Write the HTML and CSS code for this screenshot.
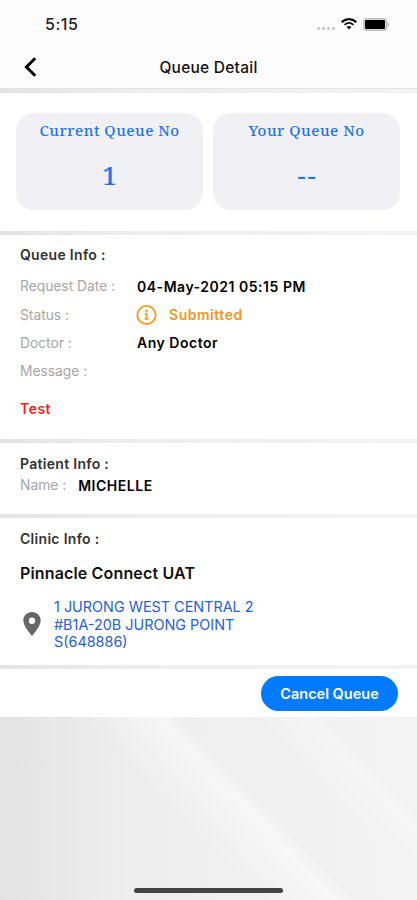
FILE: index.html
```
<!DOCTYPE html>
<html lang="en">
<head>
  <meta charset="UTF-8">
  <meta name="viewport" content="width=device-width, initial-scale=1.0">
  <title>Queue Detail</title>
  <link rel="stylesheet" href="styles.css">
</head>
<body>
  <div class="screen">
    <header class="header">
      <div class="status-bar">
        <span class="time">5:15</span>
        <div class="status-icons">
          <span class="signal"><i></i><i></i><i></i><i></i></span>
          <svg class="wifi" width="16" height="12" viewBox="0 0 16 12">
            <path d="M.7 4.2C5 .2 11 .2 15.300 4.200" fill="none" stroke="#111" stroke-width="2.200"/>
            <path d="M3.500 6.900C6.200 4.500 9.800 4.500 12.500 6.900" fill="none" stroke="#111" stroke-width="1.800"/>
            <path d="M5.500 9C7 7.700 9 7.700 10.500 9L8 11.600z" fill="#111"/>
          </svg>
          <svg class="battery" width="27" height="13" viewBox="0 0 27 13">
            <rect x=".7" y=".7" width="22.600" height="11.600" rx="2.500" fill="#ddd" stroke="#bbb" stroke-width="1.200"/>
            <rect x="2" y="2" width="20" height="9" rx="1" fill="#000"/>
            <path d="M24.500 4v5c2-.8 2-4.200 0-5z" fill="#aaa"/>
          </svg>
        </div>
      </div>
      <div class="nav-bar">
        <svg class="back" width="14" height="20" viewBox="0 0 14 20">
          <path d="M11.200 1.200L2.400 10l8.800 8.800" fill="none" stroke="#000" stroke-width="3"/>
        </svg>
        <h1>Queue Detail</h1>
      </div>
    </header>

    <!-- Queue numbers -->
    <section class="panel queue-numbers">
      <div class="queue-card">
        <h2>Current Queue No</h2>
        <p>1</p>
      </div>
      <div class="queue-card">
        <h2>Your Queue No</h2>
        <p class="empty">--</p>
      </div>
    </section>

    <section class="panel queue-info">
      <h3>Queue Info :</h3>
      <div class="row"><span class="label">Request Date :</span><span class="value">04-May-2021 05:15 PM</span></div>
      <div class="row">
        <span class="label">Status :</span>
        <span class="value status">
          <svg width="21" height="22" viewBox="0 0 22 22">
            <circle cx="11" cy="11" r="9.600" fill="none" stroke="#f99a1c" stroke-width="1.900"/>
            <circle cx="11" cy="6.800" r="1.300" fill="#f99a1c"/>
            <path d="M9.300 9.800H11v5M9 15.100h4" fill="none" stroke="#f99a1c" stroke-width="1.700"/>
          </svg>
          <span>Submitted</span>
        </span>
      </div>
      <div class="row"><span class="label">Doctor :</span><span class="value">Any Doctor</span></div>
      <div class="row"><span class="label">Message :</span></div>
      <p class="message">Test</p>
    </section>

    <section class="panel patient-info">
      <h3>Patient Info :</h3>
      <div class="name-row"><span class="label">Name :</span><span class="value">MICHELLE</span></div>
    </section>

    <section class="panel clinic-info">
      <h3>Clinic Info :</h3>
      <p class="clinic-name">Pinnacle Connect UAT</p>
      <div class="location">
        <svg width="18" height="24" viewBox="0 0 18 24">
          <path d="M9 0C4 0 .3 3.800.3 8.600.3 14.500 9 24 9 24s8.700-9.500 8.700-15.400C17.700 3.800 14 0 9 0zm0 5.500a3.200 3.200 0 1 1 0 6.400 3.200 3.200 0 0 1 0-6.400z" fill="#666"/>
        </svg>
        <address>1 JURONG WEST CENTRAL 2<br>#B1A-20B JURONG POINT<br>S(648886)</address>
      </div>
    </section>

    <section class="panel actions">
      <button class="cancel-btn">Cancel Queue</button>
    </section>

    <div class="home-area"><span class="home-indicator"></span></div>
  </div>
</body>
</html>
```
FILE: styles.css
```
* {
  box-sizing: border-box;
}

body {
  margin: 0;
  font-family: Inter, "Liberation Sans", sans-serif;
  color: #111;
}

h1, h2, h3, p {
  margin: 0;
}

svg {
  display: block;
  flex-shrink: 0;
}

/* The grey background shows through the gaps between panels */
.screen {
  height: 900px;
  display: flex;
  flex-direction: column;
  gap: 4px;
  overflow: hidden;
  background: linear-gradient(90deg, #e3e3e3 0, #eee 32%, #f3f3f3 100%);
}

.header {
  height: 89px;
  background: #fcfcfc;
  border-bottom: 1px solid #e4e4e4;
}

.status-bar {
  height: 46px;
  padding: 2px 27px 0 45px;
  display: flex;
  align-items: center;
  justify-content: space-between;
}

.time {
  font-size: 16px;
  font-weight: 500;
  letter-spacing: 0.5px;
  color: #222;
}

.status-icons {
  display: flex;
  align-items: center;
  gap: 6px;
}

.signal {
  display: flex;
  gap: 2px;
  padding-top: 8px;
}

.signal i {
  width: 3px;
  height: 3px;
  border-radius: 50%;
  background: #c4c4c4;
}

.nav-bar {
  height: 42px;
  padding: 0 24px;
  display: grid;
  grid-template-columns: 20px 1fr 20px;
  align-items: center;
}

.nav-bar h1 {
  font-size: 15.5px;
  font-weight: 500;
  letter-spacing: 0.25px;
  text-align: center;
}

.panel {
  background: #fff;
  padding: 0 20px;
}

/* Queue number cards */
.queue-numbers {
  height: 138px;
  padding: 20px 17px 0 16px;
  display: grid;
  grid-template-columns: 1fr 1fr;
  gap: 10px;
}

.queue-card {
  height: 97px;
  border-radius: 18px;
  background: #f0f0f5;
  color: #1a73f0;
  font-family: "Noto Serif", "DejaVu Serif Condensed", "DejaVu Serif", serif;
  text-align: center;
}

.queue-card h2 {
  padding-top: 7px;
  font-size: 15px;
  font-weight: 500;
  letter-spacing: 0.5px;
  line-height: 20px;
}

.queue-card p {
  margin-top: 19px;
  font-size: 26px;
  font-weight: 500;
  line-height: 32px;
}

.queue-card .empty {
  letter-spacing: 2px;
  text-indent: 2px;
}

h3 {
  font-size: 14px;
  font-weight: 600;
  letter-spacing: 0.3px;
  line-height: 20px;
  color: #333;
}

.label {
  font-size: 13.8px;
  color: #a6a6a6;
}

.value {
  font-size: 14px;
  font-weight: 600;
  letter-spacing: 0.52px;
  color: #000;
}

/* Queue info */
.queue-info {
  height: 204px;
  padding-top: 10px;
}

.queue-info h3 {
  margin-bottom: 7px;
}

.row {
  height: 28.400px;
  display: grid;
  grid-template-columns: 117px 1fr;
  align-items: center;
}

.value.status {
  display: flex;
  align-items: center;
  gap: 12px;
  margin-left: -1px;
  color: #f7941d;
}

.message {
  margin-top: 13px;
  font-size: 14px;
  font-weight: 600;
  letter-spacing: 0.5px;
  line-height: 20px;
  color: #f52222;
}

/* Patient info */
.patient-info {
  height: 71px;
  padding-top: 11px;
}

.name-row {
  display: flex;
  gap: 12px;
  line-height: 23px;
}

/* Clinic info */
.clinic-info {
  height: 147px;
  padding-top: 11px;
}

.clinic-name {
  margin-top: 13px;
  font-size: 16px;
  font-weight: 600;
  letter-spacing: 0.15px;
  line-height: 22px;
}

.location {
  margin-top: 14px;
  padding-left: 3px;
  display: flex;
  align-items: center;
  gap: 13px;
}

.location address {
  font-size: 14.400px;
  font-style: normal;
  line-height: 17.500px;
  color: #2860d8;
}

.actions {
  height: 48px;
  padding: 7px 19px 0;
  display: flex;
  justify-content: flex-end;
  align-items: flex-start;
}

.cancel-btn {
  width: 137px;
  height: 35px;
  padding: 0;
  border: none;
  border-radius: 18px;
  background: #007bff;
  color: #fff;
  font-family: inherit;
  font-size: 14.500px;
  font-weight: 600;
}

/* Background sheen below the panels */
.home-area {
  flex: 1;
  margin-top: -4px;
  padding-bottom: 7px;
  display: flex;
  align-items: flex-end;
  justify-content: center;
  background:
    linear-gradient(46deg, transparent 44%, rgba(255, 255, 255, 0.45) 57%, transparent 60%),
    linear-gradient(46deg, transparent 72%, rgba(255, 255, 255, 0.25) 82%, transparent 84%);
}

.home-indicator {
  width: 149px;
  height: 5px;
  border-radius: 3px;
  background: #444;
}
```
